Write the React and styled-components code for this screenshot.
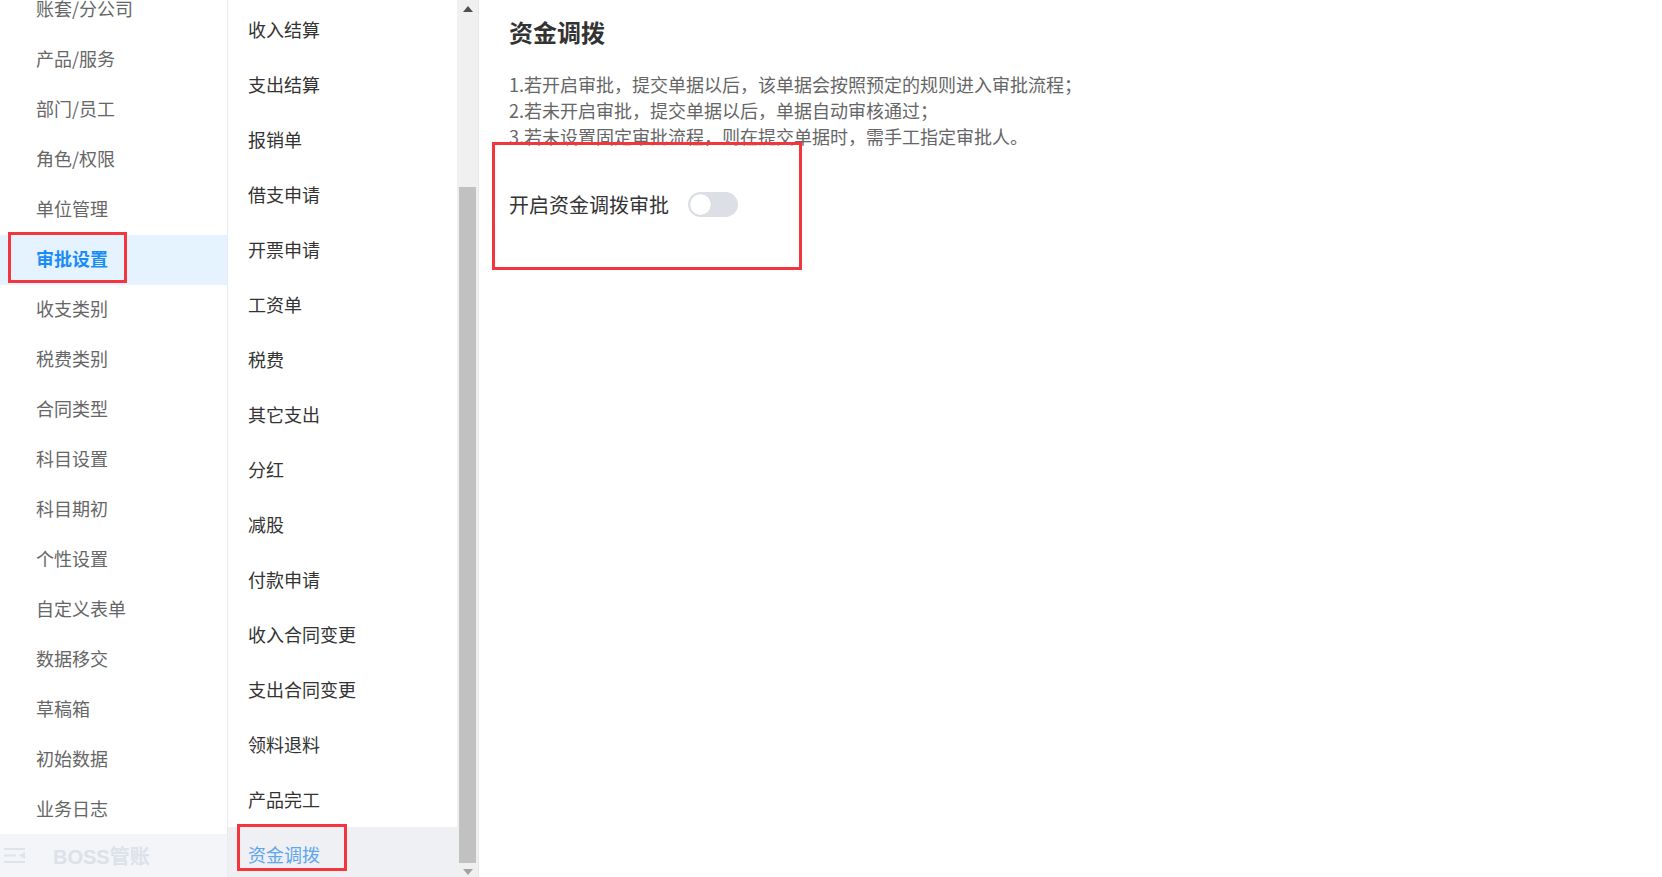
import React from "react";
import styled, { createGlobalStyle } from "styled-components";

const GlobalStyle = createGlobalStyle`
  html, body {
    margin: 0;
    padding: 0;
    background: #fff;
  }
  body {
    font-family: "Noto Sans CJK SC", "Noto Sans", sans-serif;
  }
`;

const settingsMenu = [
  "账套/分公司",
  "产品/服务",
  "部门/员工",
  "角色/权限",
  "单位管理",
  "审批设置",
  "收支类别",
  "税费类别",
  "合同类型",
  "科目设置",
  "科目期初",
  "个性设置",
  "自定义表单",
  "数据移交",
  "草稿箱",
  "初始数据",
  "业务日志",
];

const approvalMenu = [
  "收入结算",
  "支出结算",
  "报销单",
  "借支申请",
  "开票申请",
  "工资单",
  "税费",
  "其它支出",
  "分红",
  "减股",
  "付款申请",
  "收入合同变更",
  "支出合同变更",
  "领料退料",
  "产品完工",
  "资金调拨",
];

const App = () => {
  return (
    <Page>
      <GlobalStyle />
      <Sidebar>
        <SideScroll>
          <SideList>
            {settingsMenu.map((name) => (
              <SideItem key={name} $active={name === "审批设置"}>
                {name}
                {name === "审批设置" && <Mark $left={8} $top={-3} $w={119} $h={51} />}
              </SideItem>
            ))}
          </SideList>
        </SideScroll>
        <Brand>
          <svg width="22" height="15" viewBox="0 0 22 15">
            <rect x="0" y="0" width="21" height="2" fill="#dfe3ea" />
            <rect x="0" y="6.5" width="12" height="2" fill="#dfe3ea" />
            <path d="M21 4 L15 7.5 L21 11 Z" fill="#dfe3ea" />
            <rect x="0" y="13" width="21" height="2" fill="#dfe3ea" />
          </svg>
          <BrandName>BOSS管账</BrandName>
        </Brand>
      </Sidebar>

      <SubNav>
        <SubList>
          {approvalMenu.map((name) => (
            <SubItem key={name} $active={name === "资金调拨"}>
              {name}
              {name === "资金调拨" && <Mark $left={9} $top={-3} $w={110} $h={47} />}
            </SubItem>
          ))}
          <SubRest />
        </SubList>
        <Scrollbar>
          <ScrollArrow>
            <svg width="10" height="6" viewBox="0 0 10 6">
              <path d="M0 6 L5 0 L10 6 Z" fill="#505050" />
            </svg>
          </ScrollArrow>
          <Thumb />
          <ScrollArrow>
            <svg width="10" height="6" viewBox="0 0 10 6">
              <path d="M0 0 L10 0 L5 6 Z" fill="#a3a3a3" />
            </svg>
          </ScrollArrow>
        </Scrollbar>
      </SubNav>

      <Main>
        <Title>资金调拨</Title>
        <Notes>
          <p>1.若开启审批，提交单据以后，该单据会按照预定的规则进入审批流程；</p>
          <p>2.若未开启审批，提交单据以后，单据自动审核通过；</p>
          <p>3.若未设置固定审批流程，则在提交单据时，需手工指定审批人。</p>
        </Notes>
        <SettingRow>
          <SettingLabel>开启资金调拨审批</SettingLabel>
          <Switch />
          <Mark $left={-17} $top={-47} $w={310} $h={128} />
        </SettingRow>
      </Main>
    </Page>
  );
};

const Page = styled.div`
  display: flex;
  height: 877px;
  overflow: hidden;
  background: #fff;
`;

const Mark = styled.span`
  position: absolute;
  left: ${(p) => p.$left}px;
  top: ${(p) => p.$top}px;
  width: ${(p) => p.$w}px;
  height: ${(p) => p.$h}px;
  box-sizing: border-box;
  border: 3px solid #f3363d;
  pointer-events: none;
`;

const Sidebar = styled.aside`
  width: 227px;
  flex-shrink: 0;
  display: flex;
  flex-direction: column;
  border-right: 1px solid #e8ecf1;
`;

const SideScroll = styled.div`
  flex: 1;
  overflow: hidden;
`;

const SideList = styled.ul`
  list-style: none;
  margin: -15px 0 0;
  padding: 0;
`;

const SideItem = styled.li`
  position: relative;
  height: 50px;
  line-height: 46px;
  padding-left: 36px;
  font-size: 18px;
  color: ${(p) => (p.$active ? "#1a8cf5" : "#666")};
  font-weight: ${(p) => (p.$active ? 700 : 400)};
  background: ${(p) => (p.$active ? "#e5f2ff" : "transparent")};
`;

const Brand = styled.div`
  height: 43px;
  flex-shrink: 0;
  display: flex;
  align-items: center;
  gap: 27px;
  padding-left: 4px;
  background: #f3f5f8;
`;

const BrandName = styled.span`
  font-family: "Liberation Sans", "Noto Sans CJK SC", sans-serif;
  font-size: 20px;
  font-weight: 700;
  color: #dde1e8;
`;

const SubNav = styled.nav`
  display: flex;
  flex-shrink: 0;
  border-right: 1px solid #e4e8ee;
`;

const SubList = styled.ul`
  list-style: none;
  margin: 0;
  padding: 2px 0 0;
  width: 229px;
  display: flex;
  flex-direction: column;
  overflow: hidden;
`;

const SubItem = styled.li`
  position: relative;
  flex-shrink: 0;
  height: 55px;
  line-height: 55px;
  padding-left: 20px;
  font-size: 18px;
  color: ${(p) => (p.$active ? "#5ea6ee" : "#333")};
  background: ${(p) => (p.$active ? "#eff0f3" : "#fff")};
`;

const SubRest = styled.li`
  flex: 1;
  background: #eff0f3;
`;

const Scrollbar = styled.div`
  width: 21px;
  display: flex;
  flex-direction: column;
  align-items: center;
  background: #f0f0f0;
`;

const ScrollArrow = styled.div`
  width: 17px;
  height: 17px;
  flex-shrink: 0;
  display: flex;
  align-items: center;
  justify-content: center;
`;

const Thumb = styled.div`
  width: 17px;
  height: 676px;
  margin-top: 170px;
  flex-shrink: 0;
  background: #c1c1c1;
`;

const Main = styled.main`
  flex: 1;
  padding: 16px 30px;
`;

const Title = styled.h2`
  margin: 0;
  font-size: 24px;
  line-height: 32px;
  font-weight: 700;
  color: #333;
`;

const Notes = styled.div`
  margin-top: 23px;
  font-size: 18px;
  line-height: 26px;
  color: #666;

  p {
    margin: 0;
  }
`;

const SettingRow = styled.div`
  position: relative;
  margin-top: 40px;
  height: 30px;
  display: flex;
  align-items: center;
`;

const SettingLabel = styled.span`
  font-size: 20px;
  color: #333;
`;

const Switch = styled.span`
  position: relative;
  margin-left: 19px;
  width: 50px;
  height: 25px;
  border-radius: 13px;
  background: #dcdfe6;

  &::after {
    content: "";
    position: absolute;
    left: 2px;
    top: 2px;
    width: 21px;
    height: 21px;
    border-radius: 50%;
    background: #fff;
    box-shadow: 0 0 1px rgba(0, 0, 0, 0.15);
  }
`;

export default App;
